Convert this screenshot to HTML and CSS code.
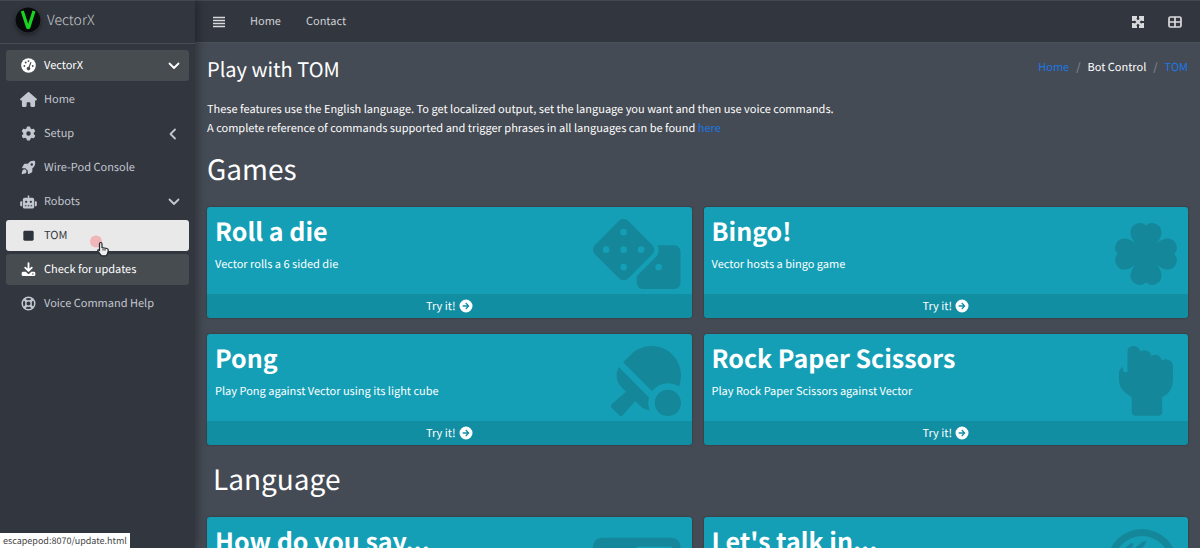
FILE: index.html
```html
<!DOCTYPE html>
<html lang="en">
<head>
<meta charset="utf-8">
<meta name="viewport" content="width=device-width, initial-scale=1">
<title>VectorX - Play with TOM</title>
<link rel="stylesheet" href="styles.css">
</head>
<body>
<svg class="defs" aria-hidden="true">
  <symbol id="down" viewBox="0 0 12 12"><path d="M1.500 3.500 6 8l4.500-4.500" fill="none" stroke="currentColor" stroke-width="1.800" stroke-linecap="round" stroke-linejoin="round"/></symbol>
  <symbol id="left" viewBox="0 0 12 12"><path d="M7 1.500 2.500 6 7 10.500" fill="none" stroke="currentColor" stroke-width="1.800" stroke-linecap="round" stroke-linejoin="round"/></symbol>
  <symbol id="go" viewBox="0 0 14 14"><path fill-rule="evenodd" fill="currentColor" d="M7 .5a6.500 6.500 0 1 0 0 13a6.500 6.500 0 0 0 0-13zM7.200 3.600 10.500 7l-3.300 3.400-.9-.9 1.700-1.800H3.700V6.300H8L6.300 4.500z"/></symbol>
</svg>
<div class="app">
  <aside class="sidebar">
    <a class="brand" href="#">
      <svg class="logo" viewBox="0 0 26 26" aria-hidden="true"><circle cx="13" cy="13" r="12.500" fill="#07090b"/><path d="M7.300 4 12.700 20.500h1L19 4" fill="none" stroke="#19d321" stroke-width="3.200" stroke-linejoin="round"/></svg>
      <span>VectorX</span>
    </a>
    <nav class="menu">
      <a class="item active" href="#"><svg class="icon" viewBox="0 0 16 16" fill="currentColor"><circle cx="8" cy="8" r="7.800"/><g fill="#474c51"><circle cx="3.600" cy="8.500" r="1"/><circle cx="5" cy="4.800" r="1"/><circle cx="8" cy="3.300" r="1"/><circle cx="12.500" cy="8.500" r="1"/><circle cx="8" cy="11.300" r="1.900"/></g><path d="m8.200 11 2.300-6.200" stroke="#474c51" stroke-width="1.200" stroke-linecap="round"/></svg><span>VectorX</span><svg class="arrow"><use href="#down"/></svg></a>
      <a class="item" href="#"><svg class="icon" viewBox="0 0 576 512" fill="currentColor"><path d="M575.800 255.500c0 18-15 32.100-32 32.100h-32l.7 160.200V472c0 22.100-17.900 40-40 40H392c-22.100 0-40-17.900-40-40v-88c0-17.700-14.300-32-32-32h-64c-17.700 0-32 14.300-32 32v88c0 22.100-17.900 40-40 40h-80c-22.100 0-40-17.900-40-40V287.600H32c-18 0-32-14-32-32.100 0-9 3-17 10-24L266.400 8c7-7 15-8 22-8s15 2 21 7l255.400 224.500c8 7 12 15 11 24z"/></svg><span>Home</span></a>
      <a class="item" href="#"><svg class="icon" viewBox="-16 -16 544 544" fill="currentColor"><path d="M495.900 166.600c3.200 8.700 .5 18.400-6.400 24.600l-43.300 39.400c1.100 8.300 1.700 16.800 1.700 25.400s-.6 17.100-1.700 25.400l43.300 39.400c6.900 6.200 9.600 15.900 6.400 24.600c-4.400 11.900-9.700 23.300-15.800 34.300l-4.700 8.100c-6.600 11-14 21.400-22.100 31.200c-5.900 7.200-15.700 9.600-24.500 6.800l-55.700-17.700c-13.400 10.300-28.200 18.900-44 25.400l-12.500 57.100c-2 9.100-9 16.300-18.200 17.800c-13.800 2.300-28 3.500-42.500 3.500s-28.700-1.200-42.500-3.500c-9.200-1.500-16.200-8.700-18.200-17.800l-12.500-57.100c-15.800-6.500-30.600-15.100-44-25.400L83.100 425.900c-8.800 2.800-18.600 .3-24.500-6.800c-8.100-9.800-15.500-20.200-22.100-31.200l-4.700-8.100c-6.100-11-11.400-22.400-15.800-34.300c-3.200-8.700-.5-18.400 6.400-24.600l43.300-39.400C64.600 273.100 64 264.600 64 256s.6-17.100 1.700-25.400L22.400 191.200c-6.900-6.200-9.600-15.900-6.400-24.600c4.400-11.900 9.700-23.300 15.800-34.300l4.700-8.100c6.600-11 14-21.400 22.100-31.200c5.900-7.200 15.700-9.600 24.500-6.800l55.700 17.700c13.400-10.300 28.200-18.900 44-25.400l12.500-57.100c2-9.100 9-16.300 18.200-17.800C227.300 1.200 241.500 0 256 0s28.700 1.200 42.500 3.500c9.200 1.500 16.200 8.700 18.200 17.800l12.500 57.100c15.800 6.500 30.600 15.100 44 25.400l55.700-17.700c8.800-2.800 18.600-.3 24.500 6.800c8.100 9.800 15.500 20.200 22.100 31.200l4.700 8.100c6.100 11 11.400 22.400 15.800 34.300zM256 336a80 80 0 1 0 0-160 80 80 0 1 0 0 160z"/></svg><span>Setup</span><svg class="arrow"><use href="#left"/></svg></a>
      <a class="item" href="#"><svg class="icon" viewBox="0 0 16 16" fill="currentColor"><path fill-rule="evenodd" d="M14.800 1.100C11.500.5 9.200 1.500 7.300 4H4.100c-.5 0-.9.300-1.100.7L1.200 8c-.2.400 0 .8.500.8h3l2.600 2.600v3c0 .5.500.7.900.5l3.200-1.700c.5-.2.700-.6.700-1.100V8.800c2.600-2 3.500-4.300 2.900-7.300zM11.500 3.400a1.300 1.300 0 1 1 0 2.600 1.300 1.300 0 0 1 0-2.600z"/><path d="M2 10.700c1-1 2.500-.9 3.300-.1s.9 2.300-.1 3.300c-.8.800-3.300 1.200-4.400 1.200 0-1.200.4-3.600 1.200-4.400z"/></svg><span>Wire-Pod Console</span></a>
      <a class="item" href="#"><svg class="icon wide" viewBox="0 0 18 14" fill="currentColor"><path fill-rule="evenodd" d="M8.200 0h1.600v2.500h3.400A1.800 1.800 0 0 1 15 4.300v7.900a1.800 1.800 0 0 1-1.800 1.800H4.800A1.800 1.800 0 0 1 3 12.200V4.300a1.800 1.800 0 0 1 1.800-1.800h3.400zM6.500 5.600a1.200 1.200 0 1 0 0 2.400 1.200 1.200 0 0 0 0-2.400zm5 0a1.200 1.200 0 1 0 0 2.400 1.200 1.200 0 0 0 0-2.400zM5.200 10.500v1h1.600v-1zm3 0v1h1.600v-1zm3 0v1h1.600v-1z"/><path d="M2.300 6.300v5.200H1.200Q.2 11.500.2 10.500V7.300q0-1 1-1zm13.400 0v5.200h1.100q1 0 1-1V7.300q0-1-1-1z"/></svg><span>Robots</span><svg class="arrow"><use href="#down"/></svg></a>
      <a class="item current" href="#"><svg class="icon" viewBox="0 0 16 16"><rect x="2.500" y="3" width="11" height="10.500" rx="1.500" fill="#2d333b"/></svg><span>TOM</span></a>
      <a class="item active" href="#"><svg class="icon" viewBox="0 0 16 16"><path d="M8 1.200v8M4.500 6 8 9.500 11.500 6" fill="none" stroke="currentColor" stroke-width="2" stroke-linecap="round" stroke-linejoin="round"/><path fill="currentColor" fill-rule="evenodd" d="M2.200 10.500h2.900l2.200 2q.7.500 1.400 0l2.200-2h2.900a1.500 1.500 0 0 1 1.500 1.500v1.500a1.500 1.500 0 0 1-1.500 1.500H2.200A1.500 1.500 0 0 1 .7 13.500V12a1.500 1.500 0 0 1 1.500-1.500zm10.500 1.600a.8.800 0 1 0 0 1.600.8.800 0 0 0 0-1.600z"/></svg><span>Check for updates</span></a>
      <a class="item" href="#"><svg class="icon" viewBox="0 0 16 16" fill="none" stroke="currentColor"><circle cx="8" cy="8" r="6.700" stroke-width="1.600"/><circle cx="8" cy="8" r="2.900" stroke-width="1.500"/><path d="m3.400 3.400 2.400 2.400m4.400 4.400 2.400 2.400m0-9.200-2.400 2.400m-4.400 4.400-2.400 2.400" stroke-width="2.600"/></svg><span>Voice Command Help</span></a>
    </nav>
  </aside>
  <div class="page">
    <header class="topbar">
      <button class="tool" type="button" aria-label="Toggle menu"><svg class="bars" viewBox="0 0 12 12"><path d="M0 1.500h12M0 4.500h12M0 7.500h12M0 10.500h12" stroke="currentColor" stroke-width="1.500"/></svg></button>
      <nav class="links"><a href="#">Home</a><a href="#">Contact</a></nav>
      <div class="tools">
        <button class="tool" type="button" aria-label="Full screen"><svg class="expand" viewBox="0 0 12 12"><path d="m2.500 2.500 7 7m0-7-7 7" stroke="currentColor" stroke-width="2.400"/><path fill="currentColor" d="M0 0h5v2L2 5H0zM12 0v5h-2L7 2V0zM0 12V7h2l3 3v2zM12 12H7v-2l3-3h2z"/></svg></button>
        <button class="tool" type="button" aria-label="Panels"><svg class="cells" viewBox="0 0 14 12"><path d="M2.500 1h9A1.500 1.500 0 0 1 13 2.500v7a1.500 1.500 0 0 1-1.500 1.500h-9A1.500 1.500 0 0 1 1 9.500v-7A1.500 1.500 0 0 1 2.500 1zM7 1v10M1 6h12" fill="none" stroke="currentColor" stroke-width="1.700"/></svg></button>
      </div>
    </header>
    <main class="content">
      <div class="heading">
        <h1>Play with TOM</h1>
        <ol class="crumbs"><li><a href="#">Home</a></li><li>Bot Control</li><li><a href="#">TOM</a></li></ol>
      </div>
      <p class="intro">These features use the English language. To get localized output, set the language you want and then use voice commands.<br>A complete reference of commands supported and trigger phrases in all languages can be found <a href="#">here</a></p>
      <h2>Games</h2>
      <section class="grid">
        <article class="card">
          <div class="inner"><h3>Roll a die</h3><p>Vector rolls a 6 sided die</p></div>
          <svg class="art" viewBox="0 0 640 512"><path d="M592 192H473.260c12.690 29.590 7.120 65.200-17 89.320L320 417.580V464c0 26.510 21.490 48 48 48h224c26.510 0 48-21.490 48-48V240c0-26.510-21.490-48-48-48zM480 376a24 24 0 1 1 0-48 24 24 0 0 1 0 48zM433.630 189.300 258.700 14.370c-19.160-19.160-50.230-19.160-69.390 0L14.370 189.300c-19.160 19.160-19.160 50.230 0 69.390L189.300 433.630c19.160 19.160 50.230 19.160 69.390 0L433.630 258.700c19.160-19.170 19.160-50.240 0-69.400zM96 248a24 24 0 1 1 0-48 24 24 0 0 1 0 48zm128 128a24 24 0 1 1 0-48 24 24 0 0 1 0 48zm0-128a24 24 0 1 1 0-48 24 24 0 0 1 0 48zm0-128a24 24 0 1 1 0-48 24 24 0 0 1 0 48zm128 128a24 24 0 1 1 0-48 24 24 0 0 1 0 48z" fill-rule="evenodd"/></svg>
          <a class="try" href="#">Try it! <svg><use href="#go"/></svg></a>
        </article>
        <article class="card">
          <div class="inner"><h3>Bingo!</h3><p>Vector hosts a bingo game</p></div>
          <svg class="art" viewBox="0 -4 62 70"><path d="M20 20C17 16 15.500 13 15.500 9.500A9.300 9.300 0 0 1 31 2.600 9.300 9.300 0 0 1 46.500 9.500C46.500 13 45 16 42 20 46 17 49 15.500 52.500 15.500A9.300 9.300 0 0 1 59.400 31 9.300 9.300 0 0 1 52.500 46.500C49 46.500 46 45 42 42 45 46 46.500 49 46.500 52.500A9.300 9.300 0 0 1 31 59.400 9.300 9.300 0 0 1 15.500 52.500C15.500 49 17 46 20 42 16 45 13 46.500 9.500 46.500A9.300 9.300 0 0 1 2.600 31 9.300 9.300 0 0 1 9.500 15.500C13 15.500 16 17 20 20z"/></svg>
          <a class="try" href="#">Try it! <svg><use href="#go"/></svg></a>
        </article>
        <article class="card">
          <div class="inner"><h3>Pong</h3><p>Play Pong against Vector using its light cube</p></div>
          <svg class="art" viewBox="0 0 512 512"><path d="M496.200 296.500C527.700 218.700 512 126.200 449 63.100 365.100-21 229-21 145.100 63.100l-56 56.100 211.500 211.500c46.100-62.100 131.500-77.400 195.600-34.200zm-217.900 79.700L57.900 155.900c-27.300 45.300-21.700 105 17.300 144.100l34.500 34.600L6.700 424c-8.600 7.500-9.100 20.700-1 28.800l53.400 53.500c8 8.100 21.200 7.600 28.700-1L177.100 402l35.700 35.700c19.700 19.700 44.600 30.500 70.300 33.300-7.100-17-11-35.600-11-55.100-.1-13.800 2.500-27 6.200-39.700zM416 320c-53 0-96 43-96 96s43 96 96 96 96-43 96-96-43-96-96-96z"/></svg>
          <a class="try" href="#">Try it! <svg><use href="#go"/></svg></a>
        </article>
        <article class="card">
          <div class="inner"><h3>Rock Paper Scissors</h3><p>Play Rock Paper Scissors against Vector</p></div>
          <svg class="art" viewBox="351 45 177 214"><path d="M377 122V64Q377 45 396 45 412 46 416 62 424 58 432 59 446 60 450 76 456 71 464 72 478 73 482 90 489 85 497 86 515 88 516 106V150Q515 175 500 190L483 202V246Q483 258 471 258H402Q390 258 390 246V202L370 187Q351 172 351 148V126Q352 114 363 109V118Q364 125 370 125H377Z"/></svg>
          <a class="try" href="#">Try it! <svg><use href="#go"/></svg></a>
        </article>
      </section>
      <h2 class="indent">Language</h2>
      <section class="grid">
        <article class="card">
          <div class="inner"><h3>How do you say...</h3></div>
          <svg class="art" viewBox="0 0 640 512"><path fill-rule="evenodd" d="M64 64h512a64 64 0 0 1 64 64v256a64 64 0 0 1-64 64H64a64 64 0 0 1-64-64V128a64 64 0 0 1 64-64zm256 64v256h256V128z"/></svg>
        </article>
        <article class="card">
          <div class="inner"><h3>Let's talk in...</h3></div>
          <svg class="art" viewBox="0 0 70 70"><path fill-rule="evenodd" d="M35 0a35 35 0 1 1 0 70 35 35 0 0 1 0-70zm0 7a28 28 0 1 0 0 56 28 28 0 0 0 0-56z"/><path d="m17 20 7-6 3 1-4 6 4-1 8-7 5-1-3 5-5 5 3 5 9 3 2 8-7 7-3 10-6-4-2-12-10-9-4-9z"/></svg>
        </article>
      </section>
    </main>
  </div>
</div>
<div class="status">escapepod:8070/update.html</div>
<svg class="pointer" viewBox="0 0 22 22" aria-hidden="true"><circle cx="6" cy="6.500" r="6" fill="#f0b6b9"/><path d="M9.500 9q0-1.500 1.200-1.500T12 9v3.500l5 1q1.500.500 1.300 2l-.8 3.500-1.500 1.800h-4.500l-3.500-4.500q-.7-1.200.3-1.500l1.200.7z" fill="#eee" stroke="#24282d" stroke-width="1.200"/><path d="M13 13.500v2m2-1.800v2" stroke="#24282d"/></svg>
</body>
</html>
```
FILE: styles.css
```css
* { box-sizing: border-box; }
body {
  margin: 0;
  background: #454b54;
  color: #fff;
  font: 11px/19px "Noto Sans CJK SC", "Open Sans", sans-serif;
  text-rendering: geometricPrecision;
}
h1, h2, h3, p, ol { margin: 0; padding: 0; font-weight: 400; }
a { color: #1a78e6; text-decoration: none; }
.defs { position: absolute; width: 0; height: 0; }
.app { display: flex; height: 100vh; overflow: hidden; }

.sidebar {
  flex: 0 0 195px;
  background: #32363e;
  border-top: 1px solid #454850;
  box-shadow: 2px 0 10px rgba(0, 0, 0, .35);
  z-index: 2;
}
.brand {
  display: flex;
  align-items: center;
  gap: 6px;
  height: 43px;
  padding: 0 15px 4px;
  border-bottom: 1px solid #484d55;
  color: #c8cacd;
  font-size: 14px;
  font-weight: 300;
}
.logo { width: 26px; height: 26px; border-radius: 50%; box-shadow: 0 2px 4px rgba(0, 0, 0, .4); }
.menu { display: flex; flex-direction: column; gap: 3px; padding: 6px; }
.item {
  display: flex;
  align-items: center;
  gap: 7px;
  height: 31px;
  padding: 0 9px 0 14px;
  border-radius: 3px;
  color: #c2c7d0;
}
.item span { flex: 1; }
.icon { width: 17px; height: 15px; }
.wide { height: 14px; }
.arrow { width: 12px; height: 12px; }
.active { background: #474c51; color: #fff; }
.current { background: #e9e9ea; color: #343a40; }

.page { flex: 1; min-width: 0; display: flex; flex-direction: column; }
.topbar {
  display: flex;
  align-items: center;
  flex: 0 0 43px;
  padding: 0 18px;
  background: #32363e;
  border-top: 1px solid #454850;
  border-bottom: 1px solid #4b5159;
}
.tool { display: flex; padding: 0; border: 0; background: none; color: #d9dadc; }
.bars, .expand { width: 12px; height: 12px; }
.cells { width: 14px; height: 12px; }
.links { display: flex; gap: 25px; padding-left: 25px; }
.links a { color: #d0d2d5; }
.tools { display: flex; gap: 24px; margin-left: auto; }

.content { flex: 1; min-height: 0; overflow: hidden; padding: 12px; }
.heading { display: flex; justify-content: space-between; align-items: flex-start; }
h1 { font-size: 20px; line-height: 28px; }
.crumbs { display: flex; list-style: none; line-height: 24px; }
.crumbs li + li::before { content: "/"; padding: 0 7px; color: #8b929a; }
.intro { padding-top: 17px; }
h2 { padding: 14px 0 21px; font-size: 28px; line-height: 34px; }
.indent { padding-left: 6px; padding-top: 1px; }

.grid { display: grid; grid-template-columns: 1fr 1fr; gap: 16px 12px; margin-bottom: 16px; }
.card {
  position: relative;
  display: flex;
  flex-direction: column;
  min-height: 111px;
  border-radius: 3px;
  background: #159fb6;
  box-shadow: 0 0 2px rgba(0, 0, 0, .4);
  overflow: hidden;
}
.inner { padding: 7px 8px 20px; }
h3 { font-size: 25px; line-height: 34px; font-weight: 700; }
.inner p { padding-top: 7px; }
.art { position: absolute; top: 12px; right: 11px; height: 70px; fill: rgba(20, 50, 60, .22); }
.try {
  display: flex;
  justify-content: center;
  align-items: center;
  gap: 3px;
  height: 24px;
  background: rgba(0, 0, 0, .1);
  color: #fff;
}
.try svg { width: 14px; height: 14px; }

.status {
  position: fixed;
  left: 0;
  bottom: 0;
  z-index: 3;
  padding: 0 3px;
  background: #fff;
  color: #444;
  font-size: 9px;
  line-height: 15px;
}
.pointer { position: fixed; left: 90px; top: 235px; z-index: 3; width: 22px; height: 22px; }
```
